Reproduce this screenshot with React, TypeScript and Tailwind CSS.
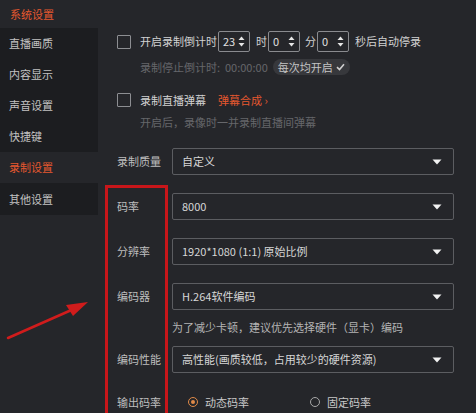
import React from "react";

const Caret = () => (
  <svg width="10" height="6" viewBox="0 0 10 6">
    <path d="M0.5 0.5 L9.5 0.5 L5 5.5 Z" fill="#f2f2f2" />
  </svg>
);

const SpinArrows = () => (
  <svg width="7" height="11" viewBox="0 0 7 11">
    <path d="M3.5 0.5 L6.5 4 L0.5 4 Z" fill="#e6e6e6" />
    <path d="M3.5 10.5 L6.5 7 L0.5 7 Z" fill="#e6e6e6" />
  </svg>
);

const Spin = ({ v }: { v: string }) => (
  <div className="w-[32px] h-[21px] border border-[#8a8b8f] rounded-[2px] flex items-center justify-between pl-[4px] pr-[4px] text-[#e0e0e0] text-[11px]">
    <span>{v}</span>
    <SpinArrows />
  </div>
);

const Checkbox = () => (
  <div className="w-[14px] h-[14px] border border-[#8d8e92] rounded-[1px] shrink-0" />
);

const Select = ({ label, value }: { label: string; value: string }) => (
  <div className="flex items-center h-[27px]">
    <div className="w-[55px] text-[#bdbdbd]">{label}</div>
    <div className="w-[282px] h-[27px] border border-[#5c5d61] rounded-[2px] flex items-center justify-between pl-[9px] pr-[11px] text-[#d6d6d6]">
      <span>{value}</span>
      <Caret />
    </div>
  </div>
);

export default function App() {
  const side = ["直播画质", "内容显示", "声音设置", "快捷键"];
  return (
    <div
      className="relative w-[476px] h-[413px] overflow-hidden bg-[#25262a] flex text-[11px] leading-none"
      style={{ fontFamily: '"Noto Sans CJK SC", "Noto Sans", sans-serif' }}
    >
      <aside className="w-[98px] shrink-0 flex flex-col">
        <div className="h-[28px] flex items-center pl-[10px] text-[#e5582f]">系统设置</div>
        <div className="bg-[#1c1d20]">
          {side.map((s) => (
            <div key={s} className="h-[31px] flex items-center pl-[9px] text-[#c2c2c2]">
              {s}
            </div>
          ))}
        </div>
        <div className="h-[31px] flex items-center pl-[9px] text-[#e5582f]">录制设置</div>
        <div className="h-[32px] flex items-center pl-[9px] text-[#c2c2c2] bg-[#1c1d20]">其他设置</div>
      </aside>

      <main className="flex-1 pl-[19px] pt-[31px] flex flex-col">
        <div className="flex items-center h-[21px]">
          <Checkbox />
          <span className="ml-[9px] text-[#d2d2d2]">开启录制倒计时</span>
          <div className="ml-[1px]">
            <Spin v="23" />
          </div>
          <span className="ml-[6px] text-[#d2d2d2]">时</span>
          <div className="ml-[1px]">
            <Spin v="0" />
          </div>
          <span className="ml-[5px] text-[#d2d2d2]">分</span>
          <div className="ml-[1px]">
            <Spin v="0" />
          </div>
          <span className="ml-[6px] text-[#d2d2d2]">秒后自动停录</span>
        </div>

        <div className="flex items-center h-[16px] mt-[7px] pl-[23px]">
          <span className="text-[#66676b]">录制停止倒计时:&nbsp;&nbsp;00:00:00</span>
          <div className="ml-[5px] h-[16px] px-[5px] rounded-full bg-[#37383c] flex items-center gap-[3px] text-[#c4c4c4]">
            <span>每次均开启</span>
            <svg width="9" height="8" viewBox="0 0 9 8">
              <path d="M1 4.2 L3.5 6.5 L8 1.2" stroke="#cfcfcf" strokeWidth="1.6" fill="none" />
            </svg>
          </div>
        </div>

        <div className="flex items-center h-[20px] mt-[15px]">
          <Checkbox />
          <span className="ml-[9px] text-[#d2d2d2]">录制直播弹幕</span>
          <span className="ml-[12px] text-[#e5582f]">弹幕合成 ›</span>
        </div>

        <div className="flex items-center h-[16px] mt-[4px] pl-[23px] text-[#66676b]">
          开启后，录像时一并录制直播间弹幕
        </div>

        <div className="mt-[18px]">
          <Select label="录制质量" value="自定义" />
        </div>
        <div className="mt-[18px]">
          <Select label="码率" value="8000" />
        </div>
        <div className="mt-[18px]">
          <Select label="分辨率" value="1920*1080 (1:1) 原始比例" />
        </div>
        <div className="mt-[18px]">
          <Select label="编码器" value="H.264软件编码" />
        </div>
        <div className="mt-[9px] h-[16px] flex items-center pl-[55px] text-[#b4b4b4]">
          为了减少卡顿，建议优先选择硬件（显卡）编码
        </div>
        <div className="mt-[11px]">
          <Select label="编码性能" value="高性能(画质较低，占用较少的硬件资源)" />
        </div>
        <div className="mt-[19px] h-[20px] flex items-center shrink-0">
          <div className="w-[71px] text-[#bdbdbd]">输出码率</div>
          <div className="w-[10px] h-[10px] rounded-full border border-[#e08a48] flex items-center justify-center">
            <div className="w-[4px] h-[4px] rounded-full bg-[#e08a48]" />
          </div>
          <span className="ml-[7px] text-[#c8c8c8]">动态码率</span>
          <div className="ml-[61px] w-[10px] h-[10px] rounded-full border border-[#a8a8a8]" />
          <span className="ml-[7px] text-[#c8c8c8]">固定码率</span>
        </div>
      </main>

      <div className="absolute left-[105px] top-[185px] w-[63px] h-[260px] border-[3px] border-[#c8161a]" />
      <svg className="absolute left-0 top-0" width="120" height="413" viewBox="0 0 120 413">
        <line x1="8" y1="338" x2="76" y2="308" stroke="#d01c1c" strokeWidth="2.5" strokeLinecap="round" />
        <path d="M88 302 L66 305 L73 316 Z" fill="#d01c1c" />
      </svg>
    </div>
  );
}
